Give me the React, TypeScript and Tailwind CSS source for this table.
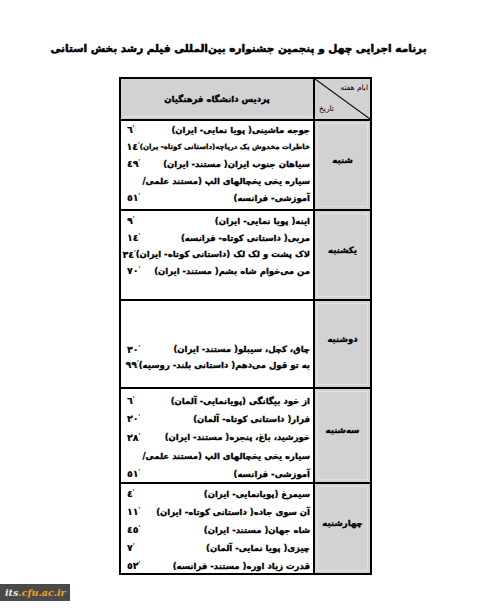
import React from "react";

const F = { fontFamily: '"DejaVu Sans", sans-serif' };

type Line = { t: string; n?: string; small?: boolean };

const Num = ({ n }: { n: string }) => (
  <span dir="ltr" className="shrink-0 pl-[6px] text-[9.5px] font-bold whitespace-nowrap text-black [-webkit-text-stroke:0.2px_#000]">
    {n}
    <span className="text-[6px] align-top font-normal">ʹ</span>
  </span>
);

const Row = ({
  day,
  lines,
  h,
  lh,
  pt,
}: {
  day: string;
  lines: Line[];
  h: string;
  lh: string;
  pt: string;
}) => (
  <div className={`flex border-t-2 border-black ${h}`}>
    <div className="w-[55px] shrink-0 bg-[#d2d2d2] p-[2px]">
      <div className="h-full border border-[#e2e2e2] flex items-center justify-center pb-[10px]">
        <span className="text-[8.5px] font-bold text-black whitespace-nowrap [-webkit-text-stroke:0.35px_#000]">{day}</span>
      </div>
    </div>
    <div className={`flex-1 min-w-0 border-r-2 border-black bg-white ${pt}`}>
      {lines.map((l, i) => (
        <div key={i} className={`flex justify-between items-center pr-[3px] ${lh}`}>
          <span
            className={`whitespace-nowrap font-bold text-black [-webkit-text-stroke:0.3px_#000] ${
              l.small ? "text-[7px]" : "text-[8.5px]"
            }`}
          >
            {l.t}
          </span>
          {l.n ? <Num n={l.n} /> : null}
        </div>
      ))}
    </div>
  </div>
);

export default function App() {
  return (
    <div className="w-[477px] h-[610px] bg-white flex flex-col items-start" style={F}>
      <h1
        dir="rtl"
        className="self-center mt-[38px] text-center text-[10.5px] font-bold text-black leading-[20px] whitespace-nowrap [-webkit-text-stroke:0.5px_#000]"
      >
        برنامه اجرایی چهل و پنجمین جشنواره بین‌المللی فیلم رشد بخش استانی
      </h1>
      <div
        dir="rtl"
        className="mt-[19px] ml-[119px] w-[253px] border-2 border-black"
      >
        <div className="flex h-[40px]">
          <div className="relative w-[55px] shrink-0 bg-[#d2d2d2]">
            <svg className="absolute inset-0" width="55" height="40" viewBox="0 0 55 40">
              <line x1="0" y1="0" x2="55" y2="40" stroke="#111" strokeWidth="1.2" />
            </svg>
            <span className="absolute right-[2px] top-[5px] text-[7.5px] leading-none text-black whitespace-nowrap">
              ایام هفته
            </span>
            <span className="absolute left-[4px] bottom-[7px] text-[7.5px] leading-none text-black whitespace-nowrap">
              تاریخ
            </span>
          </div>
          <div className="flex-1 border-r-2 border-black bg-[#d2d2d2] p-[2px]">
            <div className="h-full border-b border-[#e6e6e6] flex items-center justify-center pt-[1px]">
              <span className="text-[8.5px] font-bold text-black [-webkit-text-stroke:0.35px_#000]">پردیس دانشگاه فرهنگیان</span>
            </div>
          </div>
        </div>
        <Row
          day="شنبه"
          h="h-[90px]"
          lh="h-[17px]"
          pt="pt-[1px]"
          lines={[
            { t: "جوجه ماشینی( پویا نمایی- ایران)", n: "٦" },
            { t: "خاطرات مخدوش یک دریاچه(داستانی کوتاه- یران)", n: "١٤", small: true },
            { t: "سیاهان جنوب ایران( مستند- ایران)", n: "٤٩" },
            { t: "سیاره یخی یخچالهای الپ (مستند علمی/" },
            { t: "آموزشی- فرانسه)", n: "٥١" },
          ]}
        />
        <Row
          day="یکشنبه"
          h="h-[90px]"
          lh="h-[16.7px]"
          pt="pt-[2px]"
          lines={[
            { t: "اینه( پویا نمایی- ایران)", n: "٩" },
            { t: "مربی( داستانی کوتاه- فرانسه)", n: "١٤" },
            { t: "لاک پشت و لک لک (داستانی کوتاه- ایران)", n: "٣٤" },
            { t: "من می‌خوام شاه بشم( مستند- ایران)", n: "٧٠" },
          ]}
        />
        <Row
          day="دوشنبه"
          h="h-[88px]"
          lh="h-[15.5px]"
          pt="pt-[41px]"
          lines={[
            { t: "چاق، کچل، سیبلو( مستند- ایران)", n: "٣٠" },
            { t: "به تو قول می‌دهم( داستانی بلند- روسیه)", n: "٩٩" },
          ]}
        />
        <Row
          day="سه‌شنبه"
          h="h-[95px]"
          lh="h-[18.3px]"
          pt="pt-[3px]"
          lines={[
            { t: "از خود بیگانگی (پویانمایی- آلمان)", n: "٦" },
            { t: "فرار( داستانی کوتاه- آلمان)", n: "٢٠" },
            { t: "خورشید، باغ، پنجره( مستند- ایران)", n: "٢٨" },
            { t: "سیاره یخی یخچالهای الپ (مستند علمی/" },
            { t: "آموزشی- فرانسه)", n: "٥١" },
          ]}
        />
        <Row
          day="چهارشنبه"
          h="h-[91px]"
          lh="h-[18px]"
          pt="pt-[1px]"
          lines={[
            { t: "سیمرغ (پویانمایی- ایران)", n: "٤" },
            { t: "آن سوی جاده( داستانی کوتاه- ایران)", n: "١١" },
            { t: "شاه جهان( مستند- ایران)", n: "٤٥" },
            { t: "چیزی( پویا نمایی- آلمان)", n: "٧" },
            { t: "قدرت زیاد اوره( مستند- فرانسه)", n: "٥٢" },
          ]}
        />
      </div>
      <div className="mt-[9px] w-[70px] h-[17px] bg-[#4a4a4a] flex items-center pl-[5px]">
        <span className="text-[9.5px] font-bold italic leading-none" style={{ fontFamily: '"DejaVu Serif", serif' }}>
          <span className="text-[#e8e8e8]">its</span>
          <span className="text-[#f2a31b]">.cfu.ac.ir</span>
        </span>
      </div>
    </div>
  );
}
